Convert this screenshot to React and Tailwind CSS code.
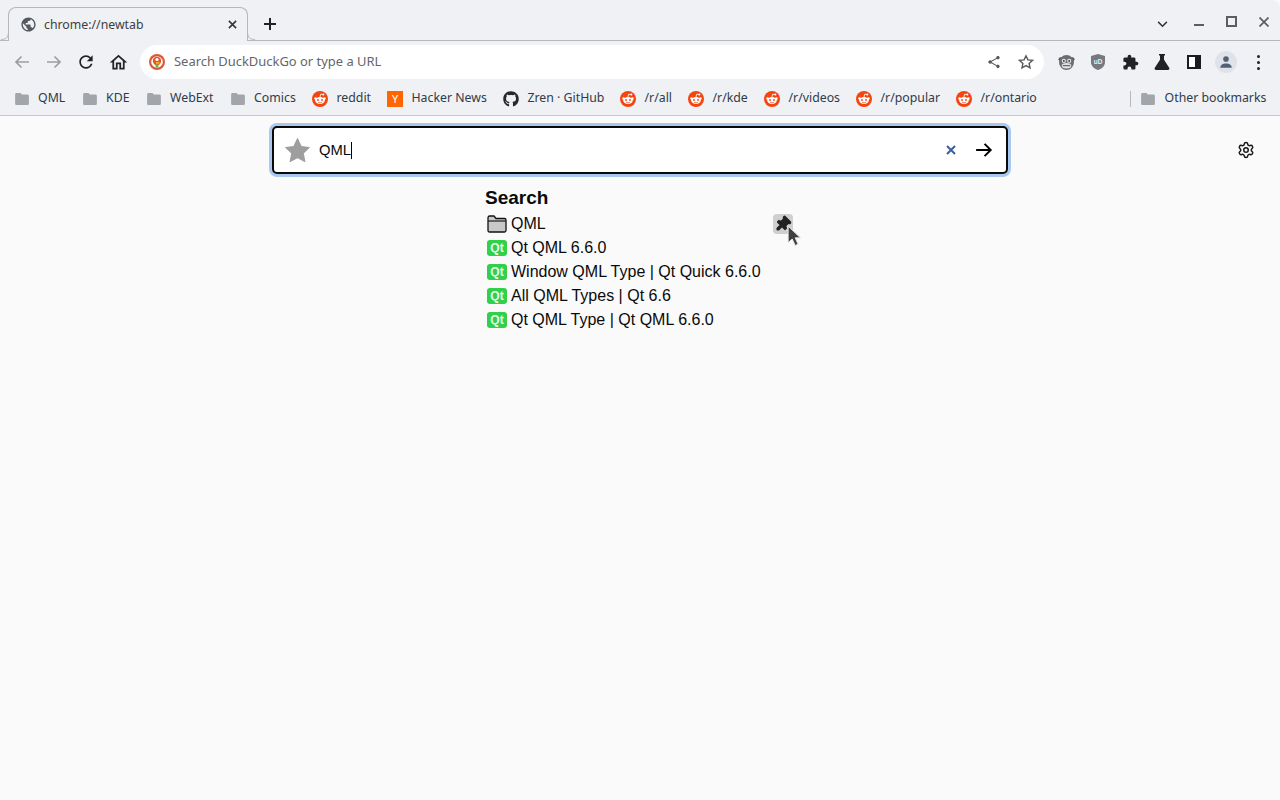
import { FaGithub } from "react-icons/fa";
import { Settings } from "lucide-react";

const Mat = ({ d, className }) => (
    <svg viewBox="0 0 24 24" className={className} fill="currentColor">
        <path d={d} />
    </svg>
);

const PUZZLE = "M20.5 11H19V7c0-1.1-.9-2-2-2h-4V3.5C13 2.12 11.88 1 10.5 1S8 2.12 8 3.5V5H4c-1.1 0-1.99.9-1.99 2v3.8H3.5c1.49 0 2.7 1.21 2.7 2.7s-1.21 2.7-2.7 2.7H2V20c0 1.1.9 2 2 2h3.8v-1.5c0-1.49 1.21-2.7 2.7-2.7 1.49 0 2.7 1.21 2.7 2.7V22H17c1.1 0 2-.9 2-2v-4h1.5c1.38 0 2.5-1.12 2.5-2.5S21.88 11 20.5 11z";
const HOME = "M12 5.69l5 4.5V18h-2v-6H9v6H7v-7.81l5-4.5M12 3L2 12h3v8h6v-6h2v6h6v-8h3L12 3z";
const RELOAD = "M17.65 6.35C16.2 4.9 14.21 4 12 4c-4.42 0-7.99 3.58-7.99 8s3.57 8 7.99 8c3.73 0 6.84-2.55 7.73-6h-2.08c-.82 2.33-3.04 4-5.65 4-3.31 0-6-2.69-6-6s2.69-6 6-6c1.66 0 3.14.69 4.22 1.78L13 11h7V4l-2.35 2.35z";
const GLOBE = "M12 2C6.48 2 2 6.48 2 12s4.48 10 10 10 10-4.48 10-10S17.52 2 12 2zm-1 17.93c-3.95-.49-7-3.85-7-7.93 0-.62.08-1.21.21-1.79L9 15v1c0 1.1.9 2 2 2v1.93zm6.9-2.54c-.26-.81-1-1.39-1.9-1.39h-1v-3c0-.55-.45-1-1-1H8v-2h2c.55 0 1-.45 1-1V7h2c1.1 0 2-.9 2-2v-.41c2.93 1.19 5 4.06 5 7.41 0 2.08-.8 3.97-2.1 5.39z";
const PIN = "M16 9V4h1c.55 0 1-.45 1-1s-.45-1-1-1H7c-.55 0-1 .45-1 1s.45 1 1 1h1v5c0 1.66-1.34 3-3 3v2h5.97v7l1 1 1-1v-7H19v-2c-1.66 0-3-1.34-3-3z";

const Arrow = ({ className, flip }) => (
    <svg viewBox="0 0 16 16" className={`${className} ${flip ? "-scale-x-100" : ""}`} fill="none" stroke="currentColor" strokeWidth="1.7">
        <path d="M1 8h13M8.5 2.5 14 8l-5.5 5.5" />
    </svg>
);

const Folder = () => (
    <svg viewBox="0 0 16 14" className="mr-[.6px] h-[12px] w-[14px] shrink-0 text-[#a2a5a9]" fill="currentColor">
        <path d="M1.6 0h4.6l1.7 1.8h6.5c.9 0 1.6.7 1.6 1.6v9c0 .9-.7 1.6-1.6 1.6H1.6C.7 14 0 13.3 0 12.4V1.6C0 .7.7 0 1.6 0z" />
    </svg>
);

const Reddit = () => (
    <svg viewBox="0 0 16 16" className="h-4 w-4 shrink-0">
        <circle cx="8" cy="8" r="8" fill="#f5450f" />
        <circle cx="3.6" cy="7.6" r="1.3" fill="#fff" />
        <circle cx="12.4" cy="7.6" r="1.3" fill="#fff" />
        <ellipse cx="8" cy="9.6" rx="4.8" ry="3.5" fill="#fff" />
        <path d="M8 6 8.6 3.2l2.2.5" stroke="#fff" strokeWidth=".8" fill="none" />
        <circle cx="11.3" cy="3.6" r="1" fill="#fff" />
        <circle cx="6" cy="9" r=".9" fill="#f5450f" />
        <circle cx="10" cy="9" r=".9" fill="#f5450f" />
        <path d="M6 11.2c1.2.8 2.8.8 4 0" stroke="#f5450f" strokeWidth=".7" fill="none" />
    </svg>
);

const YBox = () => (
    <span className="flex h-4 w-4 shrink-0 items-center justify-center bg-[#ff6600] text-[11px] leading-none text-[#fff]">Y</span>
);

const QtIcon = () => (
    <span className="flex h-4 w-5 shrink-0 items-center justify-center rounded-[3px] bg-[#2fd14b] text-[12px] font-bold leading-none text-[#eafbea]">Qt</span>
);

const bookmarks = [
    { label: "QML", icon: <Folder />, width: "w-[68px]" },
    { label: "KDE", icon: <Folder />, width: "w-[64px]" },
    { label: "WebExt", icon: <Folder />, width: "w-[84px]" },
    { label: "Comics", icon: <Folder />, width: "w-[81px]" },
    { label: "reddit", icon: <Reddit />, width: "w-[75px]" },
    { label: "Hacker News", icon: <YBox />, width: "w-[116px]" },
    { label: "Zren · GitHub", icon: <FaGithub className="h-4 w-4 shrink-0 text-[#24292e]" />, width: "w-[117px]" },
    { label: "/r/all", icon: <Reddit />, width: "w-[68px]" },
    { label: "/r/kde", icon: <Reddit />, width: "w-[76px]" },
    { label: "/r/videos", icon: <Reddit />, width: "w-[92px]" },
    { label: "/r/popular", icon: <Reddit />, width: "w-[100px]" },
    { label: "/r/ontario", icon: <Reddit />, width: "w-[96px]" },
];

const results = [
    "Qt QML 6.6.0",
    "Window QML Type | Qt Quick 6.6.0",
    "All QML Types | Qt 6.6",
    "Qt QML Type | Qt QML 6.6.0",
];

const ToolButton = ({ children }) => (
    <div className="flex h-8 w-8 items-center justify-center">{children}</div>
);

const TabStrip = () => (
    <div className="flex h-[41px] items-end rounded-tr-lg border-b border-[#b5b7ba] bg-[#eff1f4]">
        <div className="relative z-10 -mb-px ml-2 flex h-[34px] w-[240px] items-center rounded-t-lg border border-b-0 border-[#b5b7ba] bg-[#eff1f4] pl-[11px] pr-[10px]">
            <svg viewBox="0 0 8 8" className="absolute -left-2 bottom-px h-2 w-2" fill="none" stroke="#b5b7ba">
                <path d="M0 7.5C4 7.5 7.5 6 7.5 0" />
            </svg>
            <svg viewBox="0 0 8 8" className="absolute -right-2 bottom-px h-2 w-2" fill="none" stroke="#b5b7ba">
                <path d="M8 7.5C4 7.5 .5 6 .5 0" />
            </svg>
            <Mat d={GLOBE} className="h-[17px] w-[17px] shrink-0 text-[#55585d]" />
            <span className="ml-[7px] flex-1 pt-px text-[12.3px] text-[#3c4043]">chrome://newtab</span>
            <svg viewBox="0 0 10 10" className="h-[9px] w-[9px] text-[#33363a]" fill="none" stroke="currentColor" strokeWidth="1.8">
                <path d="M1 1l8 8M9 1l-8 8" />
            </svg>
        </div>
        <svg viewBox="0 0 14 14" className="mb-[9px] ml-[15px] h-[14px] w-[14px] text-[#1f2124]" fill="none" stroke="currentColor" strokeWidth="2">
            <path d="M7 1v12M1 7h12" />
        </svg>
        <div className="mb-[9px] ml-auto flex items-center text-[#5a5d62]">
            <svg viewBox="0 0 12 8" className="mb-[-1px] mr-[26px] h-[7px] w-[11px]" fill="none" stroke="#33363a" strokeWidth="1.7">
                <path d="M1 1l5 5 5-5" />
            </svg>
            <div className="mr-[22px] mt-[2px] h-[2px] w-[10px] bg-current" />
            <div className="mb-[4px] mr-[22px] h-[11px] w-[11px] border-2 border-current" />
            <svg viewBox="0 0 10 10" className="mb-[4px] mr-[11px] h-[10px] w-[10px]" fill="none" stroke="currentColor" strokeWidth="1.7">
                <path d="M.5.5l9 9M9.5.5l-9 9" />
            </svg>
        </div>
    </div>
);

const Toolbar = () => (
    <div className="flex h-[42px] items-center bg-[#eff1f4] px-[6px]">
        <ToolButton><Arrow className="h-4 w-4 text-[#9b9ea2]" flip /></ToolButton>
        <ToolButton><Arrow className="h-4 w-4 text-[#9b9ea2]" /></ToolButton>
        <ToolButton><Mat d={RELOAD} className="h-5 w-5 text-[#202225]" /></ToolButton>
        <ToolButton><Mat d={HOME} className="h-[21px] w-[21px] text-[#202225]" /></ToolButton>
        <div className="ml-[6px] flex h-[34px] w-[904px] items-center rounded-full bg-white pl-[9px] pr-[10px]">
            <svg viewBox="0 0 16 16" className="h-4 w-4 shrink-0">
                <circle cx="8" cy="8" r="8" fill="#de5833" />
                <circle cx="8" cy="8" r="5.8" fill="#fff" />
                <circle cx="8" cy="7" r="4.2" fill="#de5833" />
                <circle cx="8" cy="5.5" r="1.6" fill="#fff" />
                <path d="M6.5 10.5h3v3h-3z" fill="#65bc46" />
                <path d="M7 8.3h3.5v1.3H7z" fill="#fdd20a" />
            </svg>
            <span className="ml-[9px] flex-1 text-[12.95px] text-[#63666b]">Search DuckDuckGo or type a URL</span>
            <svg viewBox="0 0 16 16" className="mr-[17px] h-[14px] w-[14px] text-[#55585d]" fill="currentColor" stroke="currentColor">
                <path d="M12.5 3 3.5 8l9 5" fill="none" strokeWidth="1.3" />
                <circle cx="12.5" cy="3" r="1.5" />
                <circle cx="3.5" cy="8" r="1.5" />
                <circle cx="12.5" cy="13" r="1.5" />
            </svg>
            <svg viewBox="0 0 16 16" className="h-4 w-4 text-[#55585d]" fill="none" stroke="currentColor" strokeWidth="1.4">
                <path d="M8 1.8l1.9 4.1 4.5.5-3.3 3 .9 4.4L8 11.6l-4 2.2.9-4.4-3.3-3 4.5-.5z" />
            </svg>
        </div>
        <div className="ml-[6px] flex">
            <ToolButton>
                <svg viewBox="0 0 16 16" className="h-[17px] w-[17px]">
                    <circle cx="2.5" cy="5" r="2" fill="#55585d" />
                    <circle cx="13.5" cy="5" r="2" fill="#55585d" />
                    <circle cx="8" cy="8" r="7" fill="#6a6d71" />
                    <circle cx="5.5" cy="6.5" r="2" fill="#e2e2e2" />
                    <circle cx="10.5" cy="6.5" r="2" fill="#e2e2e2" />
                    <ellipse cx="8" cy="11" rx="4.5" ry="2.6" fill="#e2e2e2" />
                    <circle cx="5.5" cy="6.5" r=".8" fill="#222" />
                    <circle cx="10.5" cy="6.5" r=".8" fill="#222" />
                    <path d="M4.5 11h7" stroke="#333" strokeWidth=".8" />
                </svg>
            </ToolButton>
            <ToolButton>
                <svg viewBox="0 0 16 16" className="h-4 w-4">
                    <path d="M8 0l7 2v6c0 4-3 6.8-7 8-4-1.2-7-4-7-8V2z" fill="#76797d" />
                    <text x="8" y="9.5" textAnchor="middle" fontSize="6.5" fontWeight="700" fontFamily="'Liberation Sans', sans-serif" fill="#eee">uD</text>
                </svg>
            </ToolButton>
            <ToolButton><Mat d={PUZZLE} className="h-[17px] w-[17px] text-[#202225]" /></ToolButton>
            <ToolButton>
                <svg viewBox="0 0 16 16" className="h-4 w-4 text-[#202225]" fill="currentColor">
                    <path d="M5 0h6v1.5h-1v4.3l5.2 8c.6 1-.1 2.2-1.2 2.2H2c-1.1 0-1.8-1.2-1.2-2.2L6 5.8V1.5H5z" />
                </svg>
            </ToolButton>
            <ToolButton>
                <div className="flex h-[14px] w-[14px] border-2 border-[#1a1c1f]">
                    <div className="flex-1 bg-white" />
                    <div className="w-1 bg-[#1a1c1f]" />
                </div>
            </ToolButton>
            <ToolButton>
                <div className="flex h-[22px] w-[22px] items-center justify-center rounded-full bg-[#dfe2e8]">
                    <svg viewBox="0 0 16 16" className="h-[14px] w-[14px] text-[#535f73]" fill="currentColor">
                        <circle cx="8" cy="4.6" r="3.2" />
                        <path d="M1.5 14.5c0-3 3-4.7 6.5-4.7s6.5 1.7 6.5 4.7z" />
                    </svg>
                </div>
            </ToolButton>
            <ToolButton>
                <div className="flex flex-col gap-[3px]">
                    <div className="h-[3px] w-[3px] rounded-full bg-[#202225]" />
                    <div className="h-[3px] w-[3px] rounded-full bg-[#202225]" />
                    <div className="h-[3px] w-[3px] rounded-full bg-[#202225]" />
                </div>
            </ToolButton>
        </div>
    </div>
);

const BookmarksBar = () => (
    <div className="flex h-[33px] items-center border-b border-[#c5c7ca] bg-[#eff1f4] pb-px pl-[15px] text-[12.3px] text-[#2f3b49]">
        {bookmarks.map((b) => (
            <div key={b.label} className={`flex items-center gap-[8.5px] ${b.width} shrink-0`}>
                {b.icon}
                <span className="whitespace-nowrap">{b.label}</span>
            </div>
        ))}
        <div className="ml-[78px] h-[16px] w-px bg-[#b5b7ba]" />
        <div className="ml-[10px] flex items-center gap-[9px]">
            <Folder />
            <span className="whitespace-nowrap">Other bookmarks</span>
        </div>
    </div>
);

export default function App() {
    return (
        <div className="flex h-[800px] flex-col overflow-hidden bg-[#fafafa] font-['Noto_Sans',sans-serif]">
            <TabStrip />
            <Toolbar />
            <BookmarksBar />
            <main className="relative flex-1 font-['Liberation_Sans',sans-serif] text-[#0a0a0a]">
                <div className="mx-auto mt-[10px] flex h-12 w-[736px] items-center rounded-[5px] border-2 border-[#0a0a0a] bg-white pl-[10px] pr-[13px] ring-[3px] ring-[#a9c8f0]">
                    <svg viewBox="0 0 24 24" className="h-[27px] w-[27px] shrink-0 text-[#9e9e9e]" fill="currentColor">
                        <path d="M12 1.5l3.2 6.9 7.3.9-5.4 5.1 1.4 7.4L12 18.2l-6.5 3.6 1.4-7.4L1.5 9.3l7.3-.9z" stroke="currentColor" strokeLinejoin="round" />
                    </svg>
                    <span className="ml-[8px] text-[14.8px]">QML</span>
                    <span className="h-[17px] w-px bg-black" />
                    <svg viewBox="0 0 10 10" className="ml-auto mr-[19px] h-[10px] w-[10px] text-[#3b5f9e]" fill="none" stroke="currentColor" strokeWidth="2">
                        <path d="M1 1l8 8M9 1l-8 8" />
                    </svg>
                    <Arrow className="h-[18px] w-[18px] text-black" />
                </div>
                <div className="absolute right-[25px] top-[25px]">
                    <Settings size={18} strokeWidth={2} className="text-[#1a1a1a]" />
                </div>
                <div className="relative mx-auto mt-[12px] w-[310px]">
                    <h2 className="h-[26px] text-[19px] font-bold leading-[24px]">Search</h2>
                    <div className="flex h-[24px] items-center gap-1 pl-[2px] pr-[2px] text-[16px]">
                        <svg viewBox="0 0 20 18" className="h-[18px] w-5 shrink-0">
                            <path d="M1 3c0-1 .6-2 1.5-2h4.5l2 2.5h8.5c1 0 1.5.7 1.5 1.7V15.5c0 1-.7 1.5-1.5 1.5H2.5C1.6 17 1 16.4 1 15.500z" fill="#c9c9c9" stroke="#111" strokeWidth="1.3" />
                            <path d="M1 6h18" stroke="#111" strokeWidth="1.1" />
                        </svg>
                        <span className="flex-1">QML</span>
                        <div className="flex h-5 w-5 items-center justify-center rounded-[4px] bg-[#cfcfcf]">
                            <svg viewBox="0 0 24 24" className="h-[17px] w-[17px] -translate-x-px rotate-45 text-[#222]" fill="currentColor" stroke="currentColor" strokeWidth="3" strokeLinejoin="round">
                                <path d={PIN} />
                            </svg>
                        </div>
                    </div>
                    <svg viewBox="0 0 12 18" className="absolute left-[302px] top-[39px] h-[21px] w-[14px]">
                        <path d="M1 1v14l3.5-3 2.5 5.5 2.5-1-2.5-5.500h4.500z" fill="#3f3f3f" stroke="#e8e8e8" strokeWidth=".8" />
                    </svg>
                    {results.map((r) => (
                        <div key={r} className="flex h-[24px] items-center gap-1 pl-[2px] text-[16px]">
                            <QtIcon />
                            <span>{r}</span>
                        </div>
                    ))}
                </div>
            </main>
        </div>
    );
}
